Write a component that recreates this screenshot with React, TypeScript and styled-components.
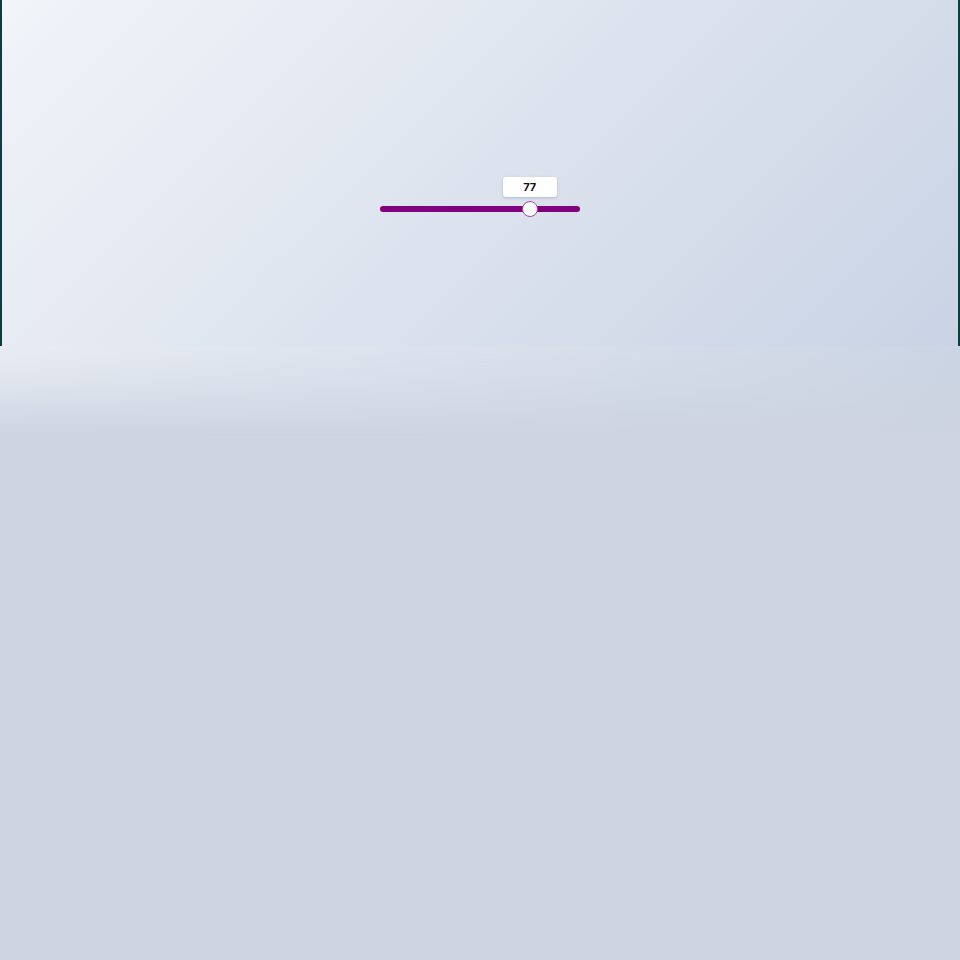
import React from "react";
import styled, { createGlobalStyle } from "styled-components";

const Global = createGlobalStyle`
  html, body { margin: 0; padding: 0; }
  body {
    background: #ced5e1;
    font-family: Inter, "Noto Sans", sans-serif;
    min-height: 960px;
  }
`;

const Stage = styled.div`
  position: relative;
  width: 960px;
  height: 346px;
  box-sizing: border-box;
  border-left: 2px solid #0e3d3d;
  border-right: 2px solid #0e3d3d;
  background: linear-gradient(135deg, #f1f4f9 0%, #dfe5ef 45%, #c9d3e5 100%);
  display: flex;
  justify-content: center;
  padding-top: 177px;
`;

const Reflection = styled.div`
  width: 960px;
  height: 90px;
  background: linear-gradient(135deg, #e8ecf3 0%, #dae1ec 45%, #c8d2e2 100%);
  -webkit-mask-image: linear-gradient(to bottom, rgba(0,0,0,1) 0%, rgba(0,0,0,0.7) 40%, rgba(0,0,0,0) 100%);
  mask-image: linear-gradient(to bottom, rgba(0,0,0,1) 0%, rgba(0,0,0,0.7) 40%, rgba(0,0,0,0) 100%);
`;

const SliderBox = styled.div`
  position: relative;
  width: 200px;
  height: 40px;
`;

const Track = styled.div`
  position: absolute;
  left: 0;
  right: 0;
  top: 29px;
  height: 6px;
  border-radius: 3px;
  background: #800080;
`;

const Thumb = styled.div`
  position: absolute;
  top: 24px;
  width: 16px;
  height: 16px;
  box-sizing: border-box;
  border-radius: 50%;
  background: #ffffff;
  border: 1px solid #9a4aa0;
  transform: translateX(-50%);
`;

const Bubble = styled.div`
  position: absolute;
  top: 0;
  width: 54px;
  height: 20px;
  border-radius: 3px;
  background: #ffffff;
  box-shadow: 0 1px 3px rgba(60, 70, 100, 0.25);
  transform: translateX(-50%);
  display: flex;
  align-items: center;
  justify-content: center;
  font-size: 11px;
  font-weight: 700;
  color: #111;
`;

export default function App() {
  const value = 77;
  const width = 200;
  const thumb = 16;
  const pos = thumb / 2 + (value / 100) * (width - thumb);
  return (
    <>
      <Global />
      <Stage>
        <SliderBox>
          <Track />
          <Bubble style={{ left: pos }}>{value}</Bubble>
          <Thumb style={{ left: pos }} />
        </SliderBox>
      </Stage>
      <Reflection />
    </>
  );
}
